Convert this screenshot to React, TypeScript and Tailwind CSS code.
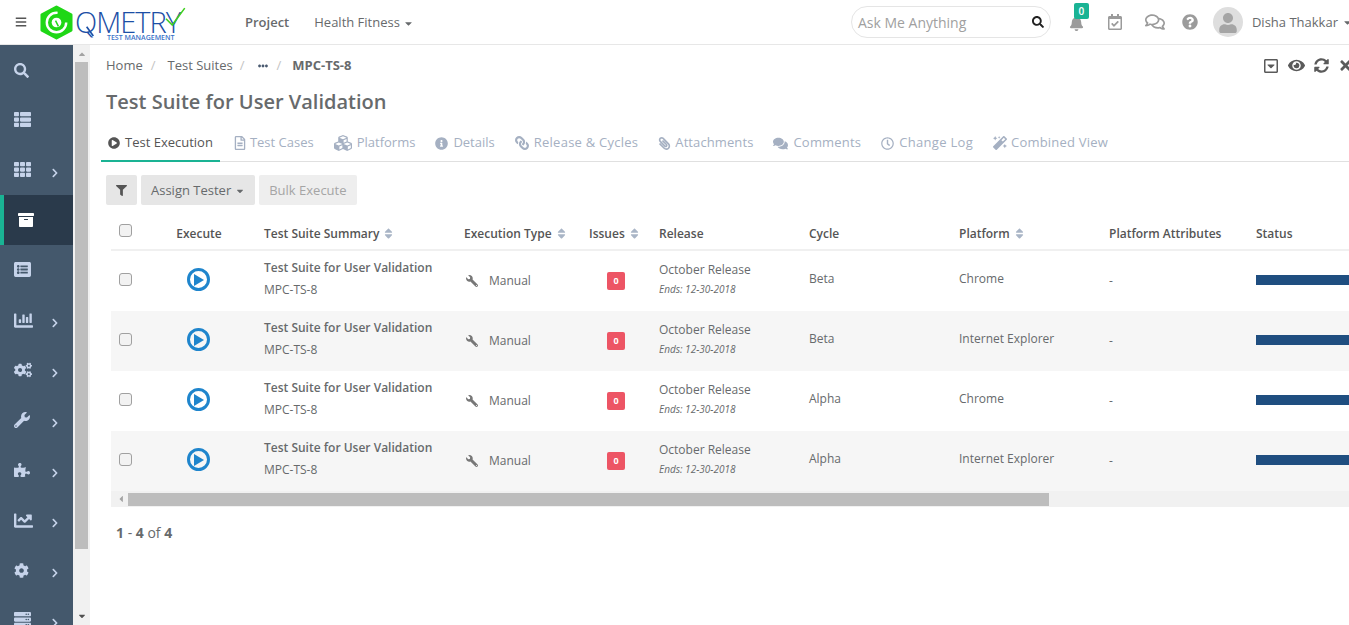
import {
  FaBars, FaBell, FaRegCalendarCheck, FaRegComments, FaQuestionCircle, FaUser, FaSearch, FaThList, FaTh,
  FaArchive, FaChartBar, FaCogs, FaWrench, FaPuzzlePiece, FaChartLine, FaCog, FaServer, FaChevronRight,
  FaRegCaretSquareDown, FaEye, FaSyncAlt, FaTimes, FaEllipsisH, FaPlayCircle, FaRegFileAlt, FaCubes,
  FaInfoCircle, FaLink, FaPaperclip, FaComments, FaRegClock, FaMagic, FaFilter, FaCaretDown, FaSort,
  FaCaretUp, FaCaretLeft, FaListAlt,
} from "react-icons/fa";

const navItems = [
  { icon: FaSearch, size: 15, cls: "pt-[1px]" },
  { icon: FaThList, size: 17, cls: "pb-[1px]" },
  { icon: FaTh, size: 17, cls: "pb-[1px]", more: true },
  { icon: FaArchive, size: 16, cls: "pb-[1px]", active: true },
  { icon: FaListAlt, size: 17, cls: "pb-[1px]" },
  { icon: FaChartBar, size: 19, cls: "pt-[1px]", more: true },
  { icon: FaCogs, size: 18, cls: "pb-[1px]", more: true },
  { icon: FaWrench, size: 16, cls: "pb-[1px]", more: true },
  { icon: FaPuzzlePiece, size: 16, cls: "pb-[1px]", more: true },
  { icon: FaChartLine, size: 19, cls: "pt-[1px]", more: true },
  { icon: FaCog, size: 15, cls: "pt-[1px]", more: true },
  { icon: FaServer, size: 17, cls: "pb-[1px]", more: true },
];

const tabs = [
  { label: "Test Execution", icon: FaPlayCircle, size: 12, cls: "gap-[5px]", active: true },
  { label: "Test Cases", icon: FaRegFileAlt, size: 14, cls: "gap-[3px]" },
  { label: "Platforms", icon: FaCubes, size: 18, cls: "gap-[5px]" },
  { label: "Details", icon: FaInfoCircle, size: 13, cls: "gap-[5px]" },
  { label: "Release & Cycles", icon: FaLink, size: 14, cls: "gap-[5px] tracking-[0.25px]", flip: true },
  { label: "Attachments", icon: FaPaperclip, size: 13, cls: "gap-[4px] tracking-[0.1px]", flip: true },
  { label: "Comments", icon: FaComments, size: 15, cls: "gap-[5px] tracking-[0.2px]" },
  { label: "Change Log", icon: FaRegClock, size: 13, cls: "gap-[5px] tracking-[0.3px]" },
  { label: "Combined View", icon: FaMagic, size: 14, cls: "gap-[4px] tracking-[0.2px]" },
];

const rows = [
  { cycle: "Beta", platform: "Chrome" },
  { cycle: "Beta", platform: "Internet Explorer" },
  { cycle: "Alpha", platform: "Chrome" },
  { cycle: "Alpha", platform: "Internet Explorer" },
];

const gridCols = "grid grid-cols-[38px_100px_200px_125px_70px_150px_150px_150px_147px_200px]";

function Checkbox() {
  return <div className="h-[13px] w-[13px] rounded-[3px] border border-[#a0a0a0] bg-[#f2f2f2]" />;
}

function SortHead({ label }: { label: string }) {
  return (
    <span className="flex items-center gap-[3px]">
      {label}
      <FaSort size={13} className="text-[#a9b5c6]" />
    </span>
  );
}

function Logo() {
  return (
    <div className="relative h-[44px] w-[150px] shrink-0">
      <svg viewBox="0 0 34 36" className="absolute left-0 top-[5px] h-[35px] w-[33px]">
        <path d="M17 2l15 8v16l-15 8-15-8V10z" fill="#1fd716" stroke="#1fd716" strokeWidth="3" strokeLinejoin="round" />
        <circle cx="17" cy="18" r="10" fill="none" stroke="#fff" strokeWidth="2.5" strokeDasharray="48 15" />
        <circle cx="17" cy="18" r="5" fill="#fff" />
        <path d="M16 16l3 6" stroke="#1fd716" strokeWidth="1.5" />
      </svg>
      <svg viewBox="0 0 24 20" className="absolute left-[40px] top-[25px] h-[14px] w-[16px]" fill="none">
        <path d="M10 2l10 14" stroke="#1c4fa6" strokeWidth="2.5" />
      </svg>
      <div className="absolute left-[35px] top-[9px] font-['Open_Sans',sans-serif] text-[29px] font-light leading-[25px] tracking-[-1px] text-[#1c4fa6]">
        QMETRY
      </div>
      <svg viewBox="0 0 40 40" className="absolute left-[121px] top-[5px] h-[30px] w-[25px]" fill="none">
        <path d="M8 18l10 10L38 1" stroke="#3fcf1e" strokeWidth="2.5" />
      </svg>
      <div className="absolute left-[67px] top-[34px] font-['Open_Sans',sans-serif] text-[7px] font-semibold leading-[8px] text-[#3a73c9]">
        TEST MANAGEMENT
      </div>
    </div>
  );
}

function Header() {
  return (
    <header className="flex h-[45px] shrink-0 items-center whitespace-nowrap border-b border-[#e7e7e7] bg-white pl-[15px] text-[13px] text-[#676a6c]">
      <FaBars size={12} className="mr-[13px] shrink-0 text-[#555]" />
      <Logo />
      <span className="ml-[55px] pt-[2px] font-semibold">Project</span>
      <span className="ml-[25px] flex items-center gap-[3px] pt-[2px]">
        Health Fitness
        <FaCaretDown size={11} />
      </span>
      <div className="ml-[437px] flex h-[32px] w-[200px] shrink-0 items-center justify-between rounded-full border border-[#e5e5e5] pl-[6px] pr-[6px] text-[14px] text-[#a0a0a0]">
        Ask Me Anything
        <FaSearch size={12} className="text-[#222]" />
      </div>
      <div className="relative ml-[18px] h-[20px] w-[16px] shrink-0 text-[#9b9b9b]">
        <FaBell size={15} className="mt-[4px]" />
        <span className="absolute left-[5px] top-[-9px] flex h-[16px] w-[15px] items-center justify-center rounded-[2px] bg-[#1ab394] text-[10px] font-semibold text-white">
          0
        </span>
      </div>
      <FaRegCalendarCheck size={16} className="ml-[22px] shrink-0 text-[#9b9b9b]" />
      <FaRegComments size={20} className="ml-[22px] shrink-0 text-[#9b9b9b]" />
      <FaQuestionCircle size={16} className="ml-[17px] shrink-0 text-[#9b9b9b]" />
      <div className="ml-[15px] flex h-[30px] w-[30px] shrink-0 items-end justify-center overflow-hidden rounded-full bg-[#dedede]">
        <FaUser size={20} className="mb-[4px] text-[#a5a5a5]" />
      </div>
      <span className="ml-[9px] pt-[2px]">Disha Thakkar</span>
      <FaCaretDown size={11} className="ml-[4px] shrink-0" />
    </header>
  );
}

function Sidebar() {
  return (
    <nav className="w-[73px] shrink-0 overflow-hidden bg-[#44586c]">
      {navItems.map((item, i) => {
        const Icon = item.icon;
        return (
          <div
            key={i}
            className={`relative flex h-[50px] items-center ${item.cls} ${
              item.active ? "border-l-[4px] border-[#1ab394] bg-[#2a3a4b] pl-[14px] text-white" : "pl-[14px] text-[#c6d3ea]"
            }`}
          >
            <Icon size={item.size} />
            {item.more && <FaChevronRight size={10} className="absolute left-[50px] top-[23px]" />}
          </div>
        );
      })}
    </nav>
  );
}

function VerticalScrollbar() {
  return (
    <div className="relative w-[17px] shrink-0 bg-[#f1f1f1]">
      <FaCaretUp size={10} className="mx-auto mt-[4px] text-[#a3a3a3]" />
      <div className="mx-auto mt-[3px] h-[487px] w-[13px] bg-[#bdbdbd]" />
      <FaCaretDown size={10} className="absolute bottom-[4px] left-[4px] text-[#505050]" />
    </div>
  );
}

function Table() {
  return (
    <div className="ml-[5px] mt-[10px] w-[1300px] text-[12px] text-[#676a6c]">
      <div className={`${gridCols} h-[36px] items-center border-b-[2px] border-[#f0f0f0] pt-[3px] font-semibold text-[#555]`}>
        <div className="pb-[6px] pl-[8px]">
          <Checkbox />
        </div>
        <div className="text-center">Execute</div>
        <div className="pl-[15px]">
          <SortHead label="Test Suite Summary" />
        </div>
        <div className="pl-[15px]">
          <SortHead label="Execution Type" />
        </div>
        <div className="pl-[15px]">
          <SortHead label="Issues" />
        </div>
        <div className="pl-[15px]">Release</div>
        <div className="pl-[15px]">Cycle</div>
        <div className="pl-[15px]">
          <SortHead label="Platform" />
        </div>
        <div className="whitespace-nowrap pl-[15px]">Platform Attributes</div>
        <div className="pl-[15px]">Status</div>
      </div>
      {rows.map((row, i) => (
        <div key={i} className={`${gridCols} h-[60px] items-center ${i % 2 === 1 ? "bg-[#f6f6f6]" : "bg-white"}`}>
          <div className="pb-[3px] pl-[8px]">
            <Checkbox />
          </div>
          <div className="flex justify-center pb-[3px] pr-[2px]">
            <div className="flex h-[23px] w-[23px] items-center justify-center rounded-full border-[3px] border-[#1f85cc]">
              <svg viewBox="0 0 10 12" className="ml-[2px] h-[12px] w-[10px]">
                <path d="M0 0l10 6-10 6z" fill="#1f85cc" />
              </svg>
            </div>
          </div>
          <div className="pb-[6px] pl-[15px]">
            <div className="font-semibold leading-[17px]">Test Suite for User Validation</div>
            <div className="mt-[5px] leading-[17px]">MPC-TS-8</div>
          </div>
          <div className="flex items-center pl-[17px]">
            <FaWrench size={12} className="-scale-x-100 text-[#777]" />
            <span className="ml-[11px]">Manual</span>
          </div>
          <div className="pl-[33px]">
            <span className="flex h-[18px] w-[18px] items-center justify-center rounded-[2px] bg-[#ed5565] text-[9px] font-bold text-white">
              0
            </span>
          </div>
          <div className="pb-[5px] pl-[15px]">
            <div className="leading-[17px]">October Release</div>
            <div className="mt-[5px] text-[10px] italic leading-[13px]">Ends: 12-30-2018</div>
          </div>
          <div className="pb-[5px] pl-[15px]">{row.cycle}</div>
          <div className="pb-[5px] pl-[15px]">{row.platform}</div>
          <div className="pl-[15px]">-</div>
          <div className="pb-[2px] pl-[15px]">
            <div className="h-[10px] bg-[#1f4e80]" />
          </div>
        </div>
      ))}
      <div className="flex h-[16px] items-center bg-[#f1f1f1]">
        <FaCaretLeft size={10} className="ml-[3px] w-[14px] text-[#a3a3a3]" />
        <div className="h-[13px] w-[921px] bg-[#bdbdbd]" />
      </div>
    </div>
  );
}

function Main() {
  return (
    <main className="min-w-0 flex-1 overflow-hidden bg-white pl-[16px] text-[#676a6c]">
      <div className="flex h-[41px] items-center text-[13px]">
        <span>Home</span>
        <span className="ml-[8px] text-[#c4c4c4]">/</span>
        <span className="ml-[12px]">Test Suites</span>
        <span className="ml-[7px] text-[#c4c4c4]">/</span>
        <FaEllipsisH size={10} className="ml-[13px] text-[#4a5a70]" />
        <span className="ml-[9px] text-[#c4c4c4]">/</span>
        <span className="ml-[11px] font-bold">MPC-TS-8</span>
        <div className="ml-auto mr-[-4px] flex items-center gap-[9px] text-[#5a5a5a]">
          <FaRegCaretSquareDown size={16} />
          <FaEye size={17} />
          <FaSyncAlt size={15} />
          <FaTimes size={15} />
        </div>
      </div>
      <h1 className="mt-[2px] text-[20px] font-semibold leading-[27px]">Test Suite for User Validation</h1>
      <div className="ml-[-5px] mt-[9px] flex h-[38px] gap-[6px] border-b border-[#e0e0e0] text-[13px]">
        {tabs.map((tab) => {
          const Icon = tab.icon;
          return (
            <div
              key={tab.label}
              className={`mb-[-1px] flex items-center whitespace-nowrap border-b-[2px] px-[7px] pt-[2px] ${tab.cls} ${
                tab.active ? "border-[#1ab394] text-[#555]" : "border-transparent text-[#a5b0c2]"
              }`}
            >
              <Icon size={tab.size} className={tab.flip ? "-scale-x-100" : ""} />
              {tab.label}
            </div>
          );
        })}
      </div>
      <div className="mt-[13px] flex gap-[4px] text-[13px]">
        <div className="flex h-[30px] w-[31px] items-center justify-center rounded-[2px] bg-[#e6e6e6]">
          <FaFilter size={11} className="text-[#555]" />
        </div>
        <div className="flex h-[30px] items-center gap-[4px] rounded-[2px] bg-[#e6e6e6] px-[10px] pt-[2px]">
          Assign Tester
          <FaCaretDown size={10} />
        </div>
        <div className="flex h-[30px] items-center rounded-[2px] bg-[#eeeeee] px-[10px] pt-[2px] text-[#a5a5a5]">
          Bulk Execute
        </div>
      </div>
      <Table />
      <div className="ml-[10px] mt-[16px] text-[14px] leading-[19px]">
        <b>1</b> - <b>4</b> of <b>4</b>
      </div>
    </main>
  );
}

export default function App() {
  return (
    <div className="flex h-screen w-screen flex-col overflow-hidden bg-white font-['Open_Sans',sans-serif]">
      <Header />
      <div className="flex min-h-0 flex-1">
        <Sidebar />
        <VerticalScrollbar />
        <Main />
      </div>
    </div>
  );
}
